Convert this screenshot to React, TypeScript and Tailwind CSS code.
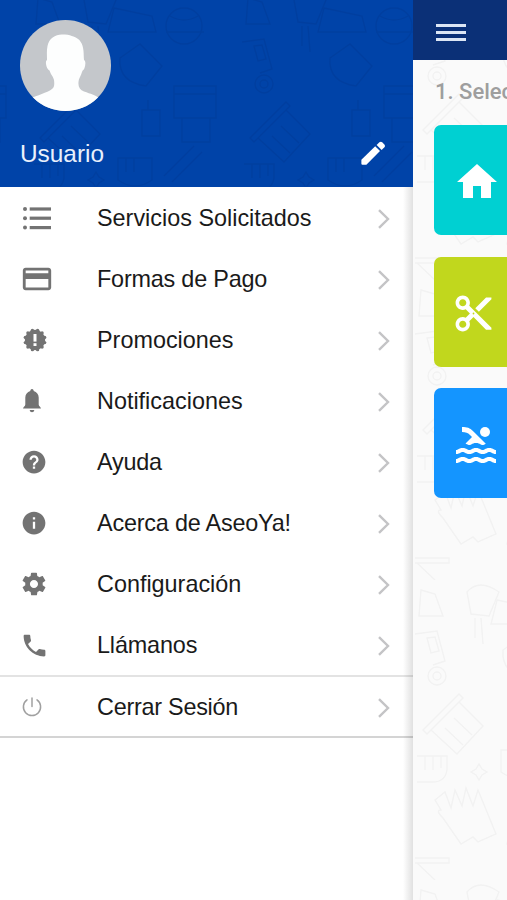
import type { ReactNode } from "react";
import { IoMdCall, IoMdHelpCircle, IoMdInformationCircle, IoMdSettings } from "react-icons/io";
import { MdContentCut, MdCreditCard, MdHome, MdPool } from "react-icons/md";

function ListIcon() {
  return (
    <svg viewBox="0 0 28 23" className="ml-[3px] h-[23px] w-7" fill="currentColor">
      {[2, 11.2, 20.6].map((y) => (
        <g key={y}>
          <circle cx="2" cy={y} r="2" />
          <rect x="6.7" y={y - 1.6} width="21.5" height="3.2" />
        </g>
      ))}
    </svg>
  );
}

const bumps = Array.from({ length: 12 }, (_, i) => ((i + 0.5) * Math.PI) / 6);

function PromoIcon() {
  return (
    <svg viewBox="0 0 24 24" className="ml-[2.5px] size-6" fill="currentColor">
      <circle cx="12" cy="12" r="10.2" />
      {bumps.map((angle) => (
        <circle key={angle} cx={12 + 10 * Math.cos(angle)} cy={12 + 10 * Math.sin(angle)} r="1.7" />
      ))}
      <rect x="10.5" y="6" width="3" height="7.6" fill="white" />
      <rect x="10.5" y="15.2" width="3" height="2.8" fill="white" />
    </svg>
  );
}

function BellIcon() {
  return (
    <svg viewBox="0 0 18 24" className="ml-[3px] h-6 w-[18px]" fill="currentColor">
      <path d="M9 0C10.200 0 10.700 1 10.700 2C13.800 3 15.600 5.500 15.700 8.500V15.500C15.700 17.200 17.800 18 18 19.600H0C.2 18 2.300 17.200 2.300 15.500V8.500C2.400 5.500 4.200 3 7.300 2C7.300 1 7.800 0 9 0Z" />
      <path d="M6.600 21H11.400Q11 23.300 9 23.300Q7 23.300 6.600 21Z" />
    </svg>
  );
}

function PowerIcon() {
  return (
    <svg viewBox="0 0 20 20" className="mt-0.5 ml-[2px] size-5" fill="none" stroke="currentColor" strokeWidth="1.5" strokeLinecap="round">
      <path d="M10 1v8.4" />
      <path d="M5 2.9a8.6 8.6 0 1 0 10 0" />
    </svg>
  );
}

function PencilIcon() {
  return (
    <svg viewBox="0 0 24 24" className="mb-0.5 size-6" fill="currentColor">
      <path d="M.4 18.800 14.200 5.300 19 10 5.400 23.700H1.400Q.4 23.700.4 22.700Z" />
      <path d="M15.600 4.100 18.400 1.300Q19.800.2 21.200 1.300L23.400 3.500Q24.500 4.900 23.400 6.300L20.600 9Z" />
    </svg>
  );
}

const menuItems: { label: string; icon: ReactNode; tracking?: string }[] = [
  { label: "Servicios Solicitados", icon: <ListIcon /> },
  { label: "Formas de Pago", icon: <MdCreditCard className="size-[34px]" />, tracking: "tracking-[-0.2px]" },
  { label: "Promociones", icon: <PromoIcon /> },
  { label: "Notificaciones", icon: <BellIcon /> },
  { label: "Ayuda", icon: <IoMdHelpCircle className="size-[28px]" />, tracking: "tracking-[-0.2px]" },
  { label: "Acerca de AseoYa!", icon: <IoMdInformationCircle className="size-[28px]" />, tracking: "tracking-[-0.2px]" },
  { label: "Configuración", icon: <IoMdSettings className="size-[28px]" /> },
  { label: "Llámanos", icon: <IoMdCall className="size-[29px]" />, tracking: "tracking-[-0.150px]" }
];

type MenuRowProps = { label: string; icon: ReactNode; tracking?: string; muted?: boolean };

function MenuRow({ label, icon, tracking = "", muted }: MenuRowProps) {
  return (
    <li className="flex h-[61px] items-center pr-[23px] pl-5">
      <span className={`flex w-[77px] shrink-0 items-center ${muted ? "text-[#a0a0a0]" : "pt-0.5 text-[#737373]"}`}>{icon}</span>
      <span className={`flex-1 pt-[3px] text-[23.4px] leading-none whitespace-nowrap text-[#1a1a1a] ${tracking}`}>{label}</span>
      <svg viewBox="0 0 12 20" className="mt-[3px] h-5 w-3" fill="none" stroke="#c4c4c6" strokeWidth="2.4">
        <path d="M1 1.2 10 10 1 18.8" />
      </svg>
    </li>
  );
}

// cleaning-supply doodles repeated behind the header and the page
function Doodles({ id, shift, className }: { id: string; shift: string; className: string }) {
  return (
    <svg className={`absolute inset-0 size-full ${className}`} fill="none" stroke="currentColor" strokeWidth="1.4">
      <defs>
        <pattern id={id} width="210" height="300" patternUnits="userSpaceOnUse" patternTransform={shift}>
          <path d="M8 10l14 4 8 22H6zM2 54l22-3 8 30-12 4M14 58l8-1 4 14-8 2z" />
          <circle cx="24" cy="96" r="9" />
          <circle cx="24" cy="96" r="4" />
          <path d="M10 150l36-36 4 4-36 36zM18 150l26 24 26-28-24-24M32 148l18 17M41 138l18 17" />
          <path d="M4 176h30v14q-2 12-14 12H4M12 176v14M20 176v14M28 176v12" />
          <path d="M22 220l10-8 6 16 4-18 7 16 4-18 7 18 5-16 18 44-18 8-5-5-12 7-18-26q-8-8-2-8z" />
          <path d="M2 278h34v5H2M4 283l18 17M86 12q-20-14-32 0l4 22 18 2zM62 38v20M68 38l2 26" />
          <path d="M84 20l38 8 4 16H78zM90 70l20-14 22 22-16 20q-28-4-26-28z" />
          <circle cx="154" cy="38" r="18" />
          <path d="M136 44h38M140 28q14 8 28 0M144 98h42v32h-42zM144 106h42M152 130v24h28v-24" />
          <path d="M134 188l30-30M142 194l30-30M112 122h18v26h-18zM118 112v10M66 184l3 5 5 3-5 3-3 5-3-5-5-3 5-3z" />
          <path d="M88 170h34v22q-17 12-34 0zM96 170v14M104 170v14M104 218l32 10-12 44-30-8z" />
          <path d="M150 212l42 4-6 50h-34zM150 222h42M160 232v24M174 232v24M108 286h66M120 292h40" />
        </pattern>
      </defs>
      <rect width="100%" height="100%" fill={`url(#${id})`} stroke="none" />
    </svg>
  );
}

function Avatar() {
  return (
    <svg viewBox="0 0 91 91" className="size-[91px]">
      <clipPath id="avatar">
        <circle cx="45.5" cy="45.5" r="45.5" />
      </clipPath>
      <g clipPath="url(#avatar)">
        <rect width="91" height="91" fill="#c4c7cb" />
        <path
          fill="#fdfefe"
          d="M43 14.500C48 14 51 15.500 53.500 16.500C60 18.500 63 24 63.500 31C63.800 34.500 63.700 37 64 40C66 41 65.500 45 64.500 48C64 50 62.500 50 62 52C61 56 58.500 58.500 58.500 62C58 67 60 70 64 71.500C71 74 75 75 79 78V92H10V79C17 75 27 73 32 69C34.500 67 34.500 64 34 60C33.500 57 31 55 29.500 50.500C27.500 49.500 26.500 47 26 44C25.800 42 26 40.500 27 40C27 35 26.500 31 27.500 26C29 18 36 14 43 14.500Z"
        />
      </g>
    </svg>
  );
}

function Drawer() {
  return (
    <aside className="relative flex w-[413px] shrink-0 flex-col bg-white">
      <header className="relative flex h-[186.500px] flex-col justify-between bg-[#0043a8] pt-5 pr-[28px] pb-[17px] pl-5">
        <Doodles id="doodles-header" shift="translate(30 -12)" className="text-[#003b98] opacity-50" />
        <div className="relative">
          <Avatar />
        </div>
        <div className="relative flex items-center justify-between text-white">
          <span className="text-[24.400px] leading-8 text-[#e9f0fc]">Usuario</span>
          <PencilIcon />
        </div>
      </header>
      <ul>
        {menuItems.map((item) => (
          <MenuRow key={item.label} {...item} />
        ))}
      </ul>
      <ul className="border-t-2 border-b-2 border-t-[#e3e3e3] border-b-[#d4d4d4] [&>li]:h-[59.500px]">
        <MenuRow label="Cerrar Sesión" icon={<PowerIcon />} tracking="tracking-[-0.250px]" muted />
      </ul>
      <div className="absolute top-[187px] right-0 bottom-0 w-2.5 bg-linear-to-r from-transparent to-black/12" />
    </aside>
  );
}

function ServicesPage() {
  return (
    <main className="relative flex w-[94px] shrink-0 flex-col overflow-hidden bg-[#fafafa]">
      <Doodles id="doodles-page" shift="translate(0 -20)" className="text-[#f2f2f2]" />
      <div className="relative flex h-[60px] items-center bg-[#0b3077] pt-[5px] pl-[23px]">
        <div className="flex w-[30px] flex-col gap-1">
          <span className="h-[3px] bg-[#dce6f5]" />
          <span className="h-[3px] bg-[#dce6f5]" />
          <span className="h-[3px] bg-[#dce6f5]" />
        </div>
      </div>
      <h1 className="relative mt-4 pl-[22px] font-[Roboto,sans-serif] text-[22px] leading-8 font-medium whitespace-nowrap text-[#9e9e9e]">
        1. Selec
      </h1>
      <div className="relative mt-[17.200px] flex flex-col gap-[21.500px] pl-[21px] text-white">
        <div className="flex h-[110px] items-center rounded-l-[7px] bg-[#00d0d2] pt-1 pl-[19px]">
          <MdHome className="size-12 shrink-0" />
        </div>
        <div className="flex h-[110px] items-center rounded-l-[7px] bg-[#c1d71d] pt-1 pl-[18px]">
          <MdContentCut className="size-[43px] shrink-0" />
        </div>
        <div className="flex h-[110px] items-center rounded-l-[7px] bg-[#1495ff] pt-1 pl-[18px]">
          <MdPool className="size-12 shrink-0" />
        </div>
      </div>
    </main>
  );
}

export default function App() {
  return (
    <div className="flex h-[900px] w-[507px] overflow-hidden bg-white font-['Liberation_Sans',Arial,sans-serif]">
      <Drawer />
      <ServicesPage />
    </div>
  );
}
